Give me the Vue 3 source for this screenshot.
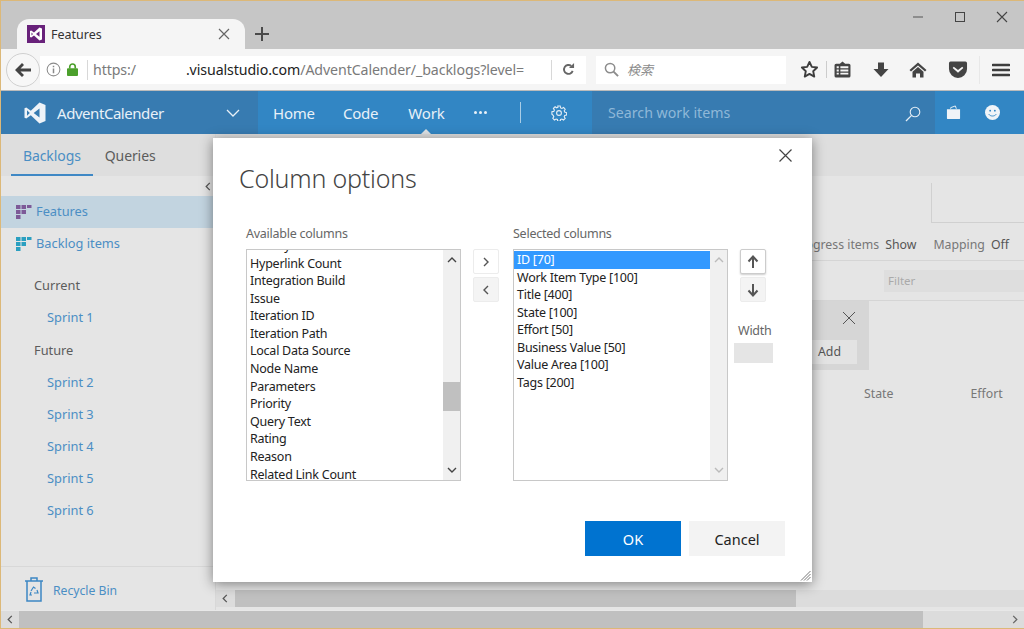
<script setup>
const availableColumns = [
  'History', 'Hyperlink Count', 'Integration Build', 'Issue', 'Iteration ID', 'Iteration Path',
  'Local Data Source', 'Node Name', 'Parameters', 'Priority', 'Query Text', 'Rating', 'Reason',
  'Related Link Count'
]
const selectedColumns = [
  'ID [70]', 'Work Item Type [100]', 'Title [400]', 'State [100]', 'Effort [50]',
  'Business Value [50]', 'Value Area [100]', 'Tags [200]'
]
const futureSprints = ['Sprint 2', 'Sprint 3', 'Sprint 4', 'Sprint 5', 'Sprint 6']
const backlogGrid = [[0, 0, 4], [5.5, 0, 4], [11, 0, 3], [0, 5, 4], [5.5, 5, 4], [0, 10, 4]]
</script>

<template>
  <div class="window">
    <div class="tabstrip">
      <div class="tab">
        <svg class="favicon" viewBox="0 0 18 18">
          <rect width="18" height="18" fill="#68217a" />
          <path fill="#fff" fill-rule="evenodd" d="M12.5 2.5 7 7.5 4.2 5.4 3 6v6l1.200.6L7 10.500l5.500 5 2.500-1V3.500zM12.500 6.300v5.400L9 9zM4.500 7.600 6 9l-1.500 1.400z" />
        </svg>
        <span class="tab-title">Features</span>
        <svg class="tab-close" viewBox="0 0 12 12"><path d="M1 1l10 10M11 1 1 11" stroke="#666" stroke-width="1.200" /></svg>
      </div>
      <svg class="new-tab" viewBox="0 0 14 14"><path d="M7 0v14M0 7h14" stroke="#4a4a4a" stroke-width="2" /></svg>
      <div class="win-controls">
        <svg viewBox="0 0 12 12"><path d="M1 6h10" stroke="#555" stroke-width="1" /></svg>
        <svg viewBox="0 0 12 12"><rect x="1.500" y="1.500" width="9" height="9" fill="none" stroke="#444" stroke-width="1" /></svg>
        <svg viewBox="0 0 12 12"><path d="M1 1l10 10M11 1 1 11" stroke="#444" stroke-width="1.100" /></svg>
      </div>
    </div>

    <div class="navbar">
      <div class="back-btn">
        <svg viewBox="0 0 18 18"><path d="M1 9l7-7 2 2-3.500 3.500H17v3H6.500L10 14l-2 2z" fill="#444" /></svg>
      </div>
      <div class="urlbar">
        <svg class="info-icon" viewBox="0 0 16 16">
          <circle cx="8" cy="8" r="6.800" fill="none" stroke="#8a8a8a" stroke-width="1.100" />
          <path d="M7.200 4h1.600v1.600H7.200zM7.200 7h1.600v5H7.200z" fill="#8a8a8a" />
        </svg>
        <svg class="lock-icon" viewBox="0 0 12 14">
          <path d="M3 6V4a3 3 0 0 1 6 0v2" fill="none" stroke="#4ca02c" stroke-width="1.800" />
          <rect y="5.500" width="12" height="8.500" rx="1" fill="#4ca02c" />
        </svg>
        <span class="url-sep"></span>
        <span class="url-text">https:/</span>
        <span class="url-host">.visualstudio.com</span>
        <span class="url-text">/AdventCalender/_backlogs?level=</span>
        <span class="url-sep refresh-sep"></span>
        <svg class="refresh-icon" viewBox="0 0 14 14">
          <path d="M11.500 8.500A4.800 4.800 0 1 1 10 3.200" fill="none" stroke="#666" stroke-width="2" />
          <path d="M7.500 5.500H13V0z" fill="#666" />
        </svg>
      </div>
      <div class="searchbar">
        <svg viewBox="0 0 16 16"><circle cx="6.500" cy="6.500" r="5" fill="none" stroke="#8c8c8c" stroke-width="1.600" /><path d="M10.200 10.200 15 15" stroke="#8c8c8c" stroke-width="2" /></svg>
        <span>検索</span>
      </div>
      <div class="nav-tools">
        <svg class="tool star" viewBox="0 0 18 18"><path d="M9 1.800l2.200 4.700 5 .6-3.700 3.500 1 5.100L9 13.200l-4.500 2.500 1-5.100L1.800 7.100l5-.6z" fill="none" stroke="#3d3d3d" stroke-width="1.800" stroke-linejoin="round" /></svg>
        <span class="tool-sep"></span>
        <svg class="tool reader" viewBox="0 0 16 16"><path fill="#444" fill-rule="evenodd" d="M5.500 2.500 8 .5l2.500 2H14a1.500 1.500 0 0 1 1.500 1.500v10a1.500 1.500 0 0 1-1.500 1.500H2A1.500 1.500 0 0 1 .5 14V4A1.500 1.500 0 0 1 2 2.500zM2.500 5v1.800h2V5zm3.500 0v1.800h7.500V5zM2.500 8v1.800h2V8zM6 8v1.800h7.500V8zm-3.500 3v1.800h2V11zm3.500 0v1.800h7.500V11z" /></svg>
        <svg class="tool download" viewBox="0 0 16 16"><path d="M5 .5h6V7h4.500L8 15 .5 7H5z" fill="#444" /></svg>
        <svg class="tool home" viewBox="0 0 18 16"><path d="M9 .5 0.500 8 2 9.500 9 3.500l7 6L17.500 8zM9 5 3.500 9.800V15.500h3.500v-4h4v4h3.500V9.800z" fill="#444" /></svg>
        <svg class="tool pocket" viewBox="0 0 18 16"><path fill="#444" fill-rule="evenodd" d="M2 .5h14A1.500 1.500 0 0 1 17.500 2v5.500a8.500 8.500 0 0 1-17 0V2A1.500 1.500 0 0 1 2 .5zM5 5.500 4 6.700 9 11l5-4.300-1-1.200L9 8.500z" /></svg>
        <span class="tool-sep menu-sep"></span>
        <svg class="tool burger" viewBox="0 0 18 14"><path d="M1 2h16M1 7h16M1 12h16" stroke="#3d3d3d" stroke-width="2.600" stroke-linecap="round" /></svg>
      </div>
    </div>

    <div class="topbar">
      <div class="brand">
        <svg class="brand-logo" viewBox="0 0 22 22">
          <path fill="#eef3f8" fill-rule="evenodd" d="M15.500.5 6.800 8.700 2.300 5.400.5 6.200v9.600l1.800.8 4.500-3.300 8.700 8.200 6 -2.500V3zM15.500 6.500v9L9.700 11zM3 8.300 5.800 11 3 13.700z" />
        </svg>
        <span class="brand-name">AdventCalender</span>
        <svg class="brand-caret" viewBox="0 0 14 8"><path d="M1 1l6 6 6-6" fill="none" stroke="#e8f0f7" stroke-width="1.300" /></svg>
      </div>
      <nav class="hub-nav">
        <span>Home</span>
        <span>Code</span>
        <span class="active">Work</span>
        <span class="more"><i></i><i></i><i></i></span>
        <span class="hub-sep"></span>
        <svg class="gear" viewBox="0 0 16 16">
          <path fill="none" stroke="#e4eef6" stroke-width="1.100" d="M6.800 1h2.400l.4 1.900 1.300.6 1.700-1 1.600 1.700-1 1.600.5 1.300 1.900.5v2.400l-1.900.4-.5 1.300 1 1.700-1.700 1.600-1.600-1-1.300.5-.5 1.900H6.800l-.4-1.900-1.300-.5-1.700 1-1.600-1.700 1-1.600-.6-1.300L.9 9.200V6.800l1.900-.4.600-1.300-1-1.700 1.700-1.600 1.600 1 1.300-.6z" />
          <circle cx="8" cy="8" r="2.400" fill="none" stroke="#e4eef6" stroke-width="1.100" />
        </svg>
      </nav>
      <div class="work-search">
        <span>Search work items</span>
        <svg viewBox="0 0 16 16"><circle cx="10" cy="6" r="4.800" fill="none" stroke="#e4eef6" stroke-width="1.100" /><path d="M6.600 9.400 1 15" stroke="#e4eef6" stroke-width="1.300" /></svg>
      </div>
      <div class="top-icons">
        <svg viewBox="0 0 16 16"><path d="M5 4V2.800L10 1l1 3" fill="none" stroke="#f0f4f8" stroke-width="1" /><path d="M1 4.500h14V14a1 1 0 0 1-1 1H2a1 1 0 0 1-1-1z" fill="#f0f4f8" /></svg>
        <svg viewBox="0 0 16 16">
          <circle cx="8" cy="8" r="8" fill="#f0f4f8" />
          <circle cx="5.500" cy="6" r="1" fill="#3286c4" /><circle cx="10.500" cy="6" r="1" fill="#3286c4" />
          <path d="M4 9.800c1.800 2.600 6.200 2.600 8 0" fill="none" stroke="#3286c4" stroke-width="1" />
        </svg>
      </div>
    </div>

    <div class="content">
      <aside class="sidebar">
        <div class="side-tabs">
          <span class="side-tab active">Backlogs</span>
          <span class="side-tab">Queries</span>
        </div>
        <div class="collapse-row">
          <svg viewBox="0 0 6 10"><path d="M5 1 1 5l4 4" fill="none" stroke="#555" stroke-width="1.400" /></svg>
        </div>
        <div class="level selected">
          <svg viewBox="0 0 16 15"><rect v-for="(c, i) in backlogGrid" :key="i" :x="c[0]" :y="c[1]" width="4.500" :height="c[2]" fill="#7d5a98" /></svg>
          <span>Features</span>
        </div>
        <div class="level">
          <svg viewBox="0 0 16 15"><rect v-for="(c, i) in backlogGrid" :key="i" :x="c[0]" :y="c[1]" width="4.500" :height="c[2]" fill="#2a9fc0" /></svg>
          <span>Backlog items</span>
        </div>
        <div class="iterations">
          <div class="iter-head">Current</div>
          <div class="iter-link">Sprint 1</div>
          <div class="iter-head future">Future</div>
          <div v-for="sprint in futureSprints" :key="sprint" class="iter-link">{{ sprint }}</div>
        </div>
        <div class="recycle">
          <svg viewBox="0 0 20 26">
            <path d="M1 5h18M7 5V2h6v3M3 5v20h14V5" fill="none" stroke="#3c87c4" stroke-width="1.500" />
            <path d="M7 15l2.500-4 2 1.500M13 14l1 3h-4M8 19H6l1-3" fill="none" stroke="#3c87c4" stroke-width="1.200" />
          </svg>
          <span>Recycle Bin</span>
        </div>
      </aside>

      <main class="main">
        <div class="main-tabs"></div>
        <div class="main-head">
          <div class="chart-box"></div>
          <div class="view-options">
            <span class="opt-label">Progress items</span><b>Show</b>
            <span class="opt-label mapping">Mapping</span><b>Off</b>
          </div>
        </div>
        <div class="filter-row"><span class="filter">Filter</span></div>
        <div class="add-row">
          <div class="add-panel">
            <svg viewBox="0 0 12 12"><path d="M0 0l12 12M12 0 0 12" stroke="#555" stroke-width="1" /></svg>
            <span class="add-btn">Add</span>
          </div>
        </div>
        <div class="col-heads"><span class="col-state">State</span><span class="col-effort">Effort</span></div>
        <div class="inner-scroll">
          <svg viewBox="0 0 6 10"><path d="M5 1 1 5l4 4" fill="none" stroke="#555" stroke-width="1.400" /></svg>
          <span class="inner-thumb"></span>
        </div>
      </main>

      <div class="dialog">
        <svg class="dialog-close" viewBox="0 0 13 13"><path d="M.5.500l12 12M12.500.500l-12 12" stroke="#444" stroke-width="1.200" /></svg>
        <h1 class="dialog-title">Column options</h1>
        <div class="dialog-body">
          <div class="col-picker">
            <label>Available columns</label>
            <div class="listbox">
              <ul class="available">
                <li v-for="name in availableColumns" :key="name">{{ name }}</li>
              </ul>
              <div class="list-scroll">
                <svg viewBox="0 0 10 6"><path d="M1 5l4-4 4 4" fill="none" stroke="#444" stroke-width="1.400" /></svg>
                <span class="thumb"></span>
                <svg viewBox="0 0 10 6"><path d="M1 1l4 4 4-4" fill="none" stroke="#444" stroke-width="1.400" /></svg>
              </div>
            </div>
          </div>
          <div class="transfer">
            <button class="small-btn"><svg viewBox="0 0 6 10"><path d="M1 1l4 4-4 4" fill="none" stroke="#555" stroke-width="1.400" /></svg></button>
            <button class="small-btn grey"><svg viewBox="0 0 6 10"><path d="M5 1 1 5l4 4" fill="none" stroke="#555" stroke-width="1.400" /></svg></button>
          </div>
          <div class="col-picker">
            <label>Selected columns</label>
            <div class="listbox">
              <ul class="selected-list">
                <li v-for="(name, i) in selectedColumns" :key="name" :class="{ current: i === 0 }">{{ name }}</li>
              </ul>
              <div class="list-scroll">
                <svg viewBox="0 0 10 6"><path d="M1 5l4-4 4 4" fill="none" stroke="#bbb" stroke-width="1.400" /></svg>
                <span class="thumb-space"></span>
                <svg viewBox="0 0 10 6"><path d="M1 1l4 4 4-4" fill="none" stroke="#bbb" stroke-width="1.400" /></svg>
              </div>
            </div>
          </div>
          <div class="order">
            <button class="small-btn raised"><svg viewBox="0 0 12 14"><path d="M6 13V2M1.500 6.500 6 1.500l4.500 5" fill="none" stroke="#555" stroke-width="2" /></svg></button>
            <button class="small-btn grey"><svg viewBox="0 0 12 14"><path d="M6 1v11M1.500 7.500 6 12.500l4.500-5" fill="none" stroke="#555" stroke-width="2" /></svg></button>
            <span class="width-label">Width</span>
            <span class="width-input"></span>
          </div>
        </div>
        <div class="dialog-footer">
          <button class="ok">OK</button>
          <button class="cancel">Cancel</button>
        </div>
        <svg class="grip" viewBox="0 0 11 11"><path d="M10.500 1 1 10.500M10.500 4 4 10.500M10.500 7 7 10.500" stroke="#777" stroke-width="1" /></svg>
      </div>
    </div>

    <div class="page-scroll">
      <svg class="scroll-left" viewBox="0 0 6 10"><path d="M5 1 1 5l4 4" fill="none" stroke="#555" stroke-width="1.400" /></svg>
      <span class="page-thumb"></span>
      <svg class="scroll-right" viewBox="0 0 6 10"><path d="M1 1l4 4-4 4" fill="none" stroke="#666" stroke-width="1.400" /></svg>
    </div>
  </div>
</template>

<style>
html, body {
  margin: 0;
  overflow: hidden;
}
</style>

<style scoped>
.window {
  width: 1024px;
  height: 629px;
  box-sizing: border-box;
  border: 1px solid #dcb878;
  border-right-width: 0;
  display: flex;
  flex-direction: column;
  overflow: hidden;
  font-family: "Noto Sans", "Noto Sans CJK JP", sans-serif;
  background: #e5e5e5;
}

.tabstrip {
  height: 48px;
  flex: none;
  background: #c6c6c6;
  display: flex;
  align-items: flex-end;
  position: relative;
}

.tab {
  margin-left: 16px;
  width: 228px;
  height: 30px;
  background: #f5f5f5;
  border-radius: 12px 12px 0 0;
  display: flex;
  align-items: center;
  box-sizing: border-box;
  padding-left: 10px;
}

.favicon {
  width: 18px;
  height: 18px;
  flex: none;
}

.tab-title {
  margin-left: 6px;
  font-size: 12.5px;
  color: #333;
  flex: 1;
}

.tab-close {
  width: 12px;
  height: 12px;
  margin-right: 15px;
}

.new-tab {
  width: 14px;
  height: 14px;
  margin: 0 0 8px 10px;
}

.win-controls {
  margin-left: auto;
  align-self: flex-start;
  display: flex;
  gap: 30px;
  padding: 10px 16px 0 0;
}

.win-controls svg {
  width: 12px;
  height: 12px;
}

.navbar {
  height: 41px;
  flex: none;
  background: #f5f5f5;
  border-bottom: 1px solid #bbb;
  display: flex;
  align-items: center;
  position: relative;
}

.back-btn {
  width: 32px;
  height: 32px;
  margin-left: 5px;
  border: 1px solid #d0d0d0;
  border-radius: 50%;
  background: #f7f7f7;
  display: flex;
  align-items: center;
  justify-content: center;
  position: relative;
  z-index: 1;
  flex: none;
}

.back-btn svg {
  width: 18px;
  height: 18px;
}

.urlbar {
  width: 546px;
  height: 28px;
  background: #fff;
  display: flex;
  align-items: center;
  flex: none;
  font-size: 14.2px;
  letter-spacing: -0.1px;
  white-space: nowrap;
}

.info-icon {
  width: 15px;
  height: 15px;
  margin-left: 6px;
}

.lock-icon {
  width: 11px;
  height: 13px;
  margin-left: 6px;
}

.url-sep {
  width: 1px;
  height: 20px;
  background: #d8d8d8;
  margin: 0 5px 0 9px;
  flex: none;
}

.url-text {
  color: #7a7a7a;
}

.url-host {
  color: #222;
  margin-left: 50px;
}

.refresh-sep {
  margin-left: auto;
  margin-right: 10px;
}

.refresh-icon {
  width: 13px;
  height: 13px;
  margin-right: 11px;
}

.searchbar {
  margin-left: 10px;
  width: 190px;
  height: 28px;
  background: #fff;
  display: flex;
  align-items: center;
  gap: 8px;
  padding-left: 8px;
  box-sizing: border-box;
  font-size: 13px;
  font-style: italic;
  color: #8c8c8c;
  flex: none;
}

.searchbar svg {
  width: 15px;
  height: 15px;
}

.nav-tools {
  flex: 1;
  display: flex;
  align-items: center;
  padding-left: 14px;
}

.tool {
  flex: none;
}

.star {
  width: 19px;
  height: 19px;
}

.tool-sep {
  width: 1px;
  height: 17px;
  background: #ccc;
  margin: 0 7px;
}

.reader {
  width: 17px;
  height: 17px;
}

.download {
  width: 16px;
  height: 16px;
  margin-left: 22px;
}

.home {
  width: 18px;
  height: 16px;
  margin-left: 20px;
}

.pocket {
  width: 20px;
  height: 17px;
  margin-left: 21px;
}

.menu-sep {
  height: 28px;
  background: #e8e8e8;
  margin: 0 12px 0 11px;
}

.burger {
  width: 18px;
  height: 14px;
}

.topbar {
  height: 43px;
  flex: none;
  background: #3286c4;
  display: flex;
  color: #e8f1f8;
}

.brand {
  width: 257px;
  flex: none;
  background: #377bb1;
  display: flex;
  align-items: center;
  box-sizing: border-box;
  padding-left: 23px;
}

.brand-logo {
  width: 22px;
  height: 22px;
}

.brand-name {
  margin-left: 11px;
  font-size: 15px;
  letter-spacing: -0.45px;
  flex: 1;
}

.brand-caret {
  width: 14px;
  height: 8px;
  margin-right: 18px;
}

.hub-nav {
  width: 334px;
  flex: none;
  display: flex;
  align-items: center;
  font-size: 15px;
  letter-spacing: -0.2px;
}

.hub-nav span {
  margin-right: 30px;
}

.hub-nav span:first-child {
  margin-left: 15px;
  margin-right: 28px;
}

.hub-nav .active {
  position: relative;
  align-self: stretch;
  display: flex;
  align-items: center;
}

.hub-nav .active::after {
  content: "";
  position: absolute;
  bottom: 0;
  left: 50%;
  margin-left: -5px;
  border: 5px solid transparent;
  border-top-width: 0;
  border-bottom-color: #dfe3e6;
}

.hub-nav .more {
  display: flex;
  gap: 2px;
  margin-right: 24px;
}

.more i {
  width: 3px;
  height: 3px;
  border-radius: 50%;
  background: #e8f1f8;
}

.hub-nav .hub-sep {
  width: 1px;
  height: 21px;
  background: #a9cde6;
  margin: 0 30px 0 9px;
}

.gear {
  width: 16px;
  height: 16px;
}

.work-search {
  width: 343px;
  flex: none;
  background: #377bb1;
  display: flex;
  align-items: center;
  justify-content: space-between;
  box-sizing: border-box;
  padding: 0 14px 0 16px;
  font-size: 14.2px;
  color: #8fb8d8;
}

.work-search svg {
  width: 16px;
  height: 16px;
  margin-top: 2px;
}

.top-icons {
  flex: 1;
  display: flex;
  align-items: center;
  gap: 24px;
  padding-left: 11px;
}

.top-icons svg {
  width: 15px;
  height: 15px;
}

.content {
  flex: 1;
  min-height: 0;
  display: flex;
  position: relative;
  background: #e5e5e5;
}

.sidebar {
  width: 214px;
  flex: none;
  border-right: 1px solid #d8d8d8;
  display: flex;
  flex-direction: column;
}

.side-tabs {
  height: 42px;
  flex: none;
  box-sizing: border-box;
  background: #dedede;
  display: flex;
  padding-left: 10px;
  font-size: 14px;
  letter-spacing: -0.1px;
}

.side-tab {
  padding: 0 12px;
  line-height: 43px;
  color: #5c5c5c;
}

.side-tab.active {
  color: #4b8ec4;
  border-bottom: 2px solid #3f88c5;
  box-sizing: border-box;
  height: 42px;
  margin-right: 0;
}

.collapse-row {
  height: 20px;
  display: flex;
  align-items: center;
  justify-content: flex-end;
  padding-right: 4px;
}

.collapse-row svg {
  width: 6px;
  height: 9px;
}

.level {
  height: 32px;
  flex: none;
  display: flex;
  align-items: center;
  gap: 4px;
  padding-left: 15px;
  font-size: 12.8px;
  color: #4b8ec4;
}

.level span {
  margin-top: -2px;
}

.level svg {
  width: 16px;
  height: 15px;
}

.level.selected {
  background: #c2d4e0;
}

.iterations {
  margin-top: 9px;
  font-size: 12.8px;
}

.iter-head {
  height: 32px;
  line-height: 32px;
  padding-left: 33px;
  color: #5c5c5c;
}

.iter-head.future {
  margin-top: 1px;
}

.iter-link {
  height: 32px;
  line-height: 32px;
  padding-left: 46px;
  color: #4b8ec4;
}

.recycle {
  margin-top: auto;
  height: 43px;
  flex: none;
  border-top: 1px solid #d8d8d8;
  box-sizing: content-box;
  display: flex;
  align-items: center;
  gap: 9px;
  padding-left: 23px;
  font-size: 12.2px;
  color: #4b8ec4;
}

.recycle span {
  margin-top: 3px;
}

.recycle svg {
  width: 20px;
  height: 26px;
}

.main {
  flex: 1;
  min-width: 0;
  display: flex;
  flex-direction: column;
  font-size: 12.3px;
  color: #777;
}

.main-tabs {
  height: 42px;
  flex: none;
  background: #dedede;
}

.main-head {
  height: 85px;
  flex: none;
  box-sizing: border-box;
  border-bottom: 1px solid #d5d5d5;
  position: relative;
  display: flex;
  flex-direction: column;
  align-items: flex-end;
}

.chart-box {
  width: 92px;
  height: 39px;
  margin-top: 7px;
  border-left: 1px solid #d0d0d0;
  border-bottom: 1px solid #d0d0d0;
}

.view-options {
  margin-top: 13px;
  padding-right: 15px;
  white-space: nowrap;
}

.view-options b {
  font-weight: 400;
  color: #555;
  margin-left: 6px;
}

.mapping {
  margin-left: 17px;
}

.filter-row {
  height: 40px;
  flex: none;
  box-sizing: border-box;
  border-bottom: 1px solid #d5d5d5;
  display: flex;
  justify-content: flex-end;
  padding-top: 9px;
}

.filter {
  width: 140px;
  height: 22px;
  box-sizing: border-box;
  background: #dedede;
  color: #aaa;
  font-size: 11.5px;
  line-height: 22px;
  padding-left: 4px;
}

.add-row {
  height: 70px;
  flex: none;
  padding-left: 560px;
}

.add-panel {
  width: 93px;
  height: 69px;
  background: #d6d6d6;
  box-sizing: border-box;
  padding: 11px 12px 0 0;
  display: flex;
  flex-direction: column;
  align-items: flex-end;
  gap: 16px;
}

.add-panel svg {
  width: 12px;
  height: 12px;
  margin-right: 2px;
}

.add-btn {
  width: 72px;
  height: 24px;
  line-height: 24px;
  background: #e3e3e3;
  box-sizing: border-box;
  padding-left: 33px;
  color: #555;
}

.col-heads {
  display: flex;
  padding-top: 14px;
  color: #777;
}

.col-state {
  margin-left: 648px;
}

.col-effort {
  margin-left: 77px;
}

.inner-scroll {
  margin-top: auto;
  margin-bottom: 3px;
  height: 17px;
  flex: none;
  background: #dcdcdc;
  display: flex;
  align-items: center;
  padding-left: 6px;
}

.inner-scroll svg {
  width: 6px;
  height: 9px;
}

.inner-thumb {
  width: 561px;
  height: 17px;
  background: #c0c0c0;
  margin-left: 7px;
}

.dialog {
  position: absolute;
  left: 212px;
  top: 4px;
  width: 599px;
  height: 444px;
  background: #fff;
  box-shadow: 0 2px 12px rgba(0, 0, 0, 0.45);
  display: flex;
  flex-direction: column;
  color: #222;
}

.dialog-close {
  position: absolute;
  top: 11px;
  right: 20px;
  width: 13px;
  height: 13px;
}

.dialog-title {
  margin: 20px 0 0 26px;
  font-size: 25px;
  line-height: 40px;
  font-weight: 300;
  letter-spacing: -0.2px;
  color: #444;
}

.dialog-body {
  margin-top: 27px;
  padding-left: 33px;
  display: flex;
  font-size: 12.5px;
  letter-spacing: -0.25px;
}

.col-picker {
  width: 215px;
  flex: none;
}

.col-picker label {
  display: block;
  height: 24px;
  line-height: 17px;
  color: #666;
}

.listbox {
  height: 232px;
  box-sizing: border-box;
  border: 1px solid #c8c8c8;
  display: flex;
  overflow: hidden;
}

.listbox ul {
  flex: 1;
  min-width: 0;
  margin: 0;
  padding: 0;
  list-style: none;
}

.listbox li {
  height: 17.58px;
  line-height: 17.58px;
  padding-left: 3px;
  white-space: nowrap;
}

.available {
  margin-top: -13px !important;
}

.selected-list {
  padding-top: 1px !important;
}

.selected-list .current {
  background: #3399ff;
  color: #fff;
}

.list-scroll {
  width: 17px;
  flex: none;
  background: #f0f0f0;
  display: flex;
  flex-direction: column;
  align-items: center;
  padding: 7px 0;
  box-sizing: border-box;
}

.list-scroll svg {
  width: 10px;
  height: 6px;
  flex: none;
}

.thumb {
  width: 17px;
  height: 29px;
  background: #c0c0c0;
  margin: 119px 0 auto;
}

.thumb-space {
  margin-top: auto;
}

.transfer {
  width: 26px;
  margin: 24px 14px 0 12px;
  display: flex;
  flex-direction: column;
  gap: 3px;
  flex: none;
}

.small-btn {
  width: 26px;
  height: 25px;
  padding: 0;
  border: 1px solid #ececec;
  border-radius: 2px;
  background: #fff;
  display: flex;
  align-items: center;
  justify-content: center;
}

.small-btn.grey {
  background: #f4f4f4;
}

.small-btn.raised {
  border-color: #ccc;
  box-shadow: 0 1px 2px rgba(0, 0, 0, 0.2);
}

.small-btn svg {
  width: 8px;
  height: 10px;
}

.order .small-btn svg {
  width: 12px;
  height: 14px;
}

.order {
  margin: 24px 0 0 12px;
  display: flex;
  flex-direction: column;
  gap: 3px;
  flex: none;
}

.width-label {
  margin: 17px 0 0 -2px;
  color: #666;
}

.width-input {
  width: 39px;
  height: 20px;
  margin: 1px 0 0 -6px;
  background: #e5e5e5;
}

.dialog-footer {
  margin-top: auto;
  padding: 0 27px 26px 0;
  display: flex;
  justify-content: flex-end;
  gap: 8px;
}

.dialog-footer button {
  width: 96px;
  height: 35px;
  border: 0;
  padding: 0;
  font-family: inherit;
  font-size: 14.5px;
}

.ok {
  background: #0073d0;
  color: #fff;
}

.cancel {
  background: #f3f3f3;
  color: #222;
}

.grip {
  position: absolute;
  right: 1px;
  bottom: 1px;
  width: 11px;
  height: 11px;
}

.page-scroll {
  height: 17px;
  flex: none;
  background: #dcdcdc;
  display: flex;
  align-items: center;
  border-top: 1px solid #e8e8e8;
}

.scroll-left {
  width: 6px;
  height: 9px;
  margin-left: 6px;
}

.page-thumb {
  width: 904px;
  height: 17px;
  background: #c0c0c0;
  margin-left: 6px;
}

.scroll-right {
  width: 6px;
  height: 9px;
  margin-left: auto;
  margin-right: 6px;
}
</style>
